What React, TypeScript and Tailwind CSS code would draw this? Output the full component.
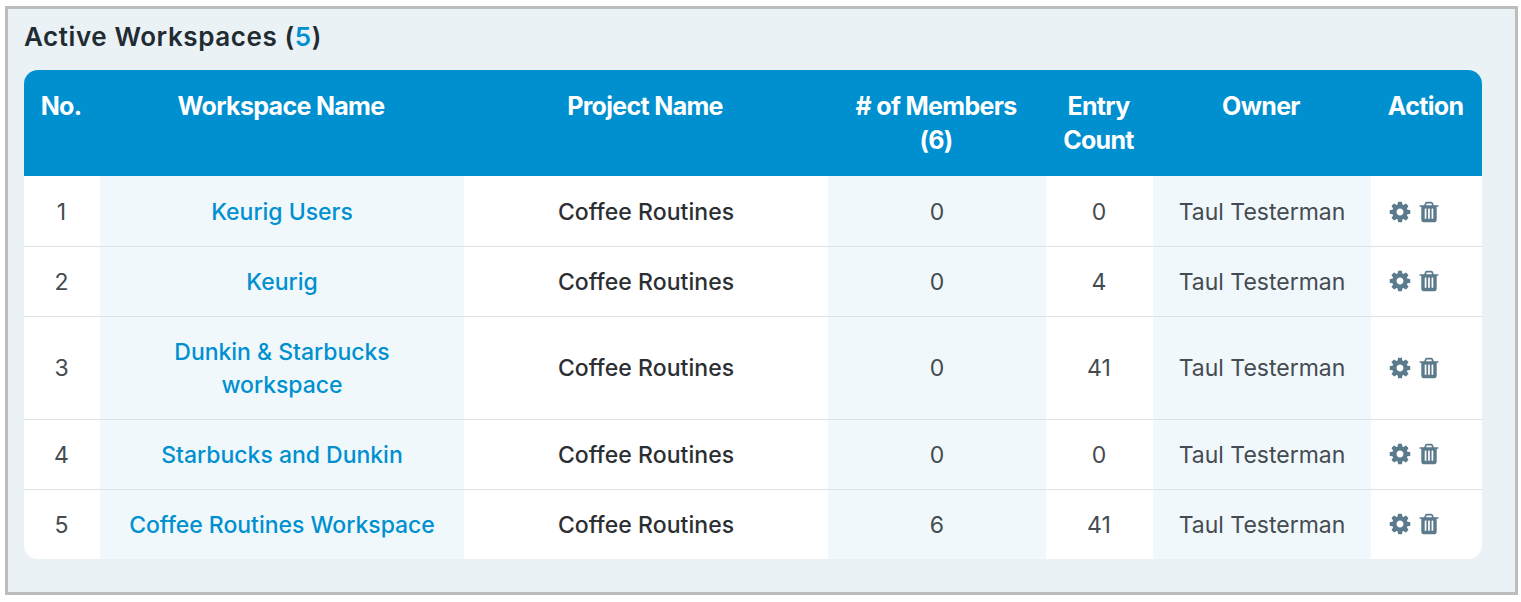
import React from "react";

const rows = [
  { n: 1, w: "Keurig Users", m: 0, e: 0, h: "h-[70px]" },
  { n: 2, w: "Keurig", m: 0, e: 4, h: "h-[70px]" },
  { n: 3, w: "Dunkin & Starbucks workspace", m: 0, e: 41, h: "h-[103px]" },
  { n: 4, w: "Starbucks and Dunkin", m: 0, e: 0, h: "h-[70px]" },
  { n: 5, w: "Coffee Routines Workspace", m: 6, e: 41, h: "h-[70px]" },
];

const Cog = () => (
  <svg viewBox="0 0 1792 1792" className="h-[24px] w-[24px]" fill="currentColor">
    <path d="M1152 896q0-106-75-181t-181-75-181 75-75 181 75 181 181 75 181-75 75-181zm512-109v222q0 12-8 23t-20 13l-185 28q-19 54-39 91 35 50 107 138 10 12 10 25t-9 23q-27 37-99 108t-94 71q-12 0-26-9l-138-108q-44 23-91 38-16 136-29 186-7 28-36 28h-222q-14 0-24.5-8.5t-11.5-21.5l-28-184q-49-16-90-37l-141 107q-10 9-25 9-14 0-25-11-126-114-165-168-7-10-7-23 0-12 8-23 15-21 51-66.5t54-70.5q-27-50-41-99l-183-27q-13-2-21-12.5t-8-23.5v-222q0-12 8-23t19-13l186-28q14-46 39-92-40-57-107-138-10-12-10-24 0-10 9-23 26-36 98.5-107.5t94.5-71.5q13 0 26 10l138 107q44-23 91-38 16-136 29-186 7-28 36-28h222q14 0 24.5 8.5t11.5 21.5l28 184q49 16 90 37l142-107q9-9 24-9 13 0 25 10 129 119 165 170 7 8 7 22 0 12-8 23-15 21-51 66.5t-54 70.5q26 50 41 98l183 28q13 2 21 12.5t8 23.5z" />
  </svg>
);

const Trash = () => (
  <svg viewBox="0 0 1792 1792" className="h-[24px] w-[24px]" fill="currentColor">
    <path d="M704 1376v-704q0-14-9-23t-23-9h-64q-14 0-23 9t-9 23v704q0 14 9 23t23 9h64q14 0 23-9t9-23zm256 0v-704q0-14-9-23t-23-9h-64q-14 0-23 9t-9 23v704q0 14 9 23t23 9h64q14 0 23-9t9-23zm256 0v-704q0-14-9-23t-23-9h-64q-14 0-23 9t-9 23v704q0 14 9 23t23 9h64q14 0 23-9t9-23zm-544-992h448l-48-117q-7-9-17-11h-317q-10 2-17 11zm928 32v64q0 14-9 23t-23 9h-96v948q0 83-47 143.5t-113 60.5h-832q-66 0-113-58.5t-47-141.5v-952h-96q-14 0-23-9t-9-23v-64q0-14 9-23t23-9h309l70-167q15-37 54-63t79-26h320q40 0 79 26t54 63l70 167h309q14 0 23 9t9 23z" />
  </svg>
);

export default function App() {
  return (
    <div className="h-[602px] bg-white pt-[6px] pl-[5px] pr-[3px] pb-[7px] font-['Inter',sans-serif]">
      <div className="h-[589px] border-[3px] border-[#bdbdbd] bg-[#eaf2f6] pl-[16px] pr-[33px] pt-[10px]">
        <h2 className="h-[51px] text-[26px] leading-[36px] font-semibold tracking-[0.58px] text-[#212b32]">
          Active Workspaces (<span className="text-[#0090d0]">5</span>)
        </h2>
        <div className="overflow-hidden rounded-[14px] bg-white">
          <table className="w-[1458px] table-fixed border-collapse text-[23px] text-center">
            <colgroup>
              <col className="w-[76px]" />
              <col className="w-[364px]" />
              <col className="w-[364px]" />
              <col className="w-[218px]" />
              <col className="w-[107px]" />
              <col className="w-[218px]" />
              <col className="w-[111px]" />
            </colgroup>
            <thead>
              <tr className="h-[106px] bg-[#0090d0] text-white">
                {["No.", "Workspace Name", "Project Name", "# of Members (6)", "Entry Count", "Owner", "Action"].map((t) => (
                  <th key={t} className="pl-[15px] pr-[17px] pt-[19px] align-top text-[25px] leading-[34px] font-bold tracking-[-0.68px]">
                    {t}
                  </th>
                ))}
              </tr>
            </thead>
            <tbody className="leading-[33px] text-[#454b51]">
              {rows.map((r, i) => {
                const pad = i === 0 ? "pt-[4px]" : "pt-[2px]";
                const iconPad = i === 0 ? "pt-[2px]" : "";
                return (
                  <tr key={r.n} className={`${r.h} ${i > 0 ? "border-t border-[#dee2e6]" : ""}`}>
                    <td className={`${pad} pr-[1px]`}>{r.n}</td>
                    <td className={`${pad} bg-[#f0f8fc] px-[24px] font-medium tracking-[-0.02px] text-[#0090d0]`}>{r.w}</td>
                    <td className={`${pad} font-medium tracking-[0.05px] text-[#2b2f33]`}>Coffee Routines</td>
                    <td className={`${pad} bg-[#f0f8fc]`}>{r.m}</td>
                    <td className={`${pad} pr-[1px]`}>{r.e}</td>
                    <td className={`${pad} bg-[#f0f8fc]`}>Taul Testerman</td>
                    <td className={iconPad}>
                      <div className="flex items-center gap-[5.5px] pl-[16.5px] text-[#5b7b8c]">
                        <Cog />
                        <Trash />
                      </div>
                    </td>
                  </tr>
                );
              })}
            </tbody>
          </table>
        </div>
      </div>
    </div>
  );
}
